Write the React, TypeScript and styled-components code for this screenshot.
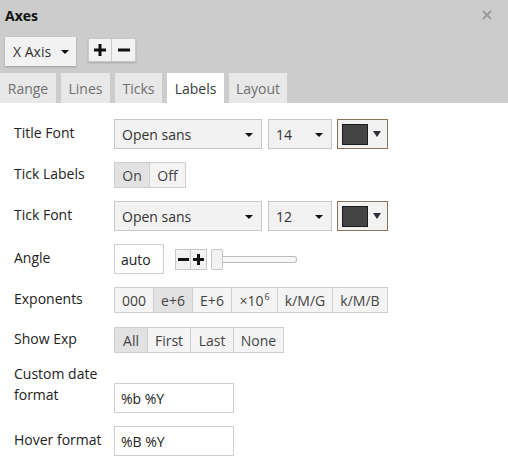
import React from "react";
import styled, { createGlobalStyle } from "styled-components";

const Global = createGlobalStyle`
  html, body { margin: 0; padding: 0; background: #fff; }
  body { font-family: "Open Sans", "Liberation Sans", sans-serif; color: #222; }
  * { box-sizing: border-box; }
`;

const Panel = styled.div`
  width: 508px;
  height: 472px;
  background: #fff;
  overflow: hidden;
`;

const Header = styled.div`
  background: #cccccc;
  padding: 5px 0 0 0;
  display: flex;
  flex-direction: column;
`;

const TitleBar = styled.div`
  display: flex;
  justify-content: space-between;
  align-items: center;
  padding: 0 16px 0 5px;
  height: 20px;
`;

const Title = styled.div`
  font-weight: 700;
  font-size: 14px;
  color: #111;
`;

const Close = styled.div`
  width: 10px;
  height: 10px;
  display: flex;
`;

const AxisBar = styled.div`
  display: flex;
  align-items: flex-start;
  gap: 12px;
  padding: 12px 5px 0 5px;
`;

const Dropdown = styled.div<{ $w: number; $h: number }>`
  width: ${(p) => p.$w}px;
  height: ${(p) => p.$h}px;
  background: #f2f2f2;
  border: 1px solid #c8c8c8;
  display: flex;
  align-items: center;
  justify-content: space-between;
  padding: 0 8px 0 7px;
  font-size: 14px;
  color: #333;
`;

const AxisDropdown = styled(Dropdown)`
  border: none;
  box-shadow: 0 1px 2px rgba(0, 0, 0, 0.25);
  padding: 0 7px 0 8px;
`;

const Caret = styled.span`
  width: 0;
  height: 0;
  border-left: 4px solid transparent;
  border-right: 4px solid transparent;
  border-top: 4px solid #111;
  margin-top: 1px;
`;

const IconPair = styled.div`
  display: flex;
  margin-top: 1px;
  box-shadow: 0 1px 2px rgba(0, 0, 0, 0.2);
`;

const IconBtn = styled.div<{ $s: number; $h: number }>`
  width: ${(p) => p.$s}px;
  height: ${(p) => p.$h}px;
  background: #f2f2f2;
  border: 1px solid #c8c8c8;
  display: flex;
  align-items: center;
  justify-content: center;
  & + & { border-left: none; }
`;

const Tabs = styled.div`
  display: flex;
  gap: 5px;
  margin-top: 7px;
`;

const Tab = styled.div<{ $active?: boolean; $w: number }>`
  width: ${(p) => p.$w}px;
  height: 30px;
  display: flex;
  align-items: center;
  justify-content: center;
  font-size: 14px;
  background: ${(p) => (p.$active ? "#fff" : "#e8e8e8")};
  color: ${(p) => (p.$active ? "#3a3a3a" : "#6f6f6f")};
`;

const Body = styled.div`
  padding: 16px 0 0 14px;
  display: flex;
  flex-direction: column;
  gap: 13px;
`;

const Row = styled.div<{ $top?: boolean; $mt?: number }>`
  display: flex;
  align-items: ${(p) => (p.$top ? "flex-start" : "center")};
  margin-top: ${(p) => p.$mt ?? 0}px;
`;

const Label = styled.div`
  width: 100px;
  font-size: 14px;
  line-height: 21px;
  color: #222;
  margin-top: -3px;
`;

const Controls = styled.div<{ $mt?: number }>`
  display: flex;
  align-items: center;
  gap: 6px;
  margin-top: ${(p) => p.$mt ?? 0}px;
`;

const ColorBtn = styled.div`
  width: 51px;
  height: 30px;
  border: 1px solid #8f7358;
  background: #f2f2f2;
  display: flex;
  align-items: center;
  gap: 5px;
  padding-left: 4px;
  margin-left: -1px;
`;

const Swatch = styled.div`
  width: 26px;
  height: 21px;
  background: #444;
  border: 1px solid #1a1a1a;
`;

const SmallCaret = styled.span`
  width: 0;
  height: 0;
  border-left: 4px solid transparent;
  border-right: 4px solid transparent;
  border-top: 6px solid #2b2f3a;
`;

const Group = styled.div`
  display: flex;
`;

const Seg = styled.div<{ $active?: boolean; $w: number }>`
  width: ${(p) => p.$w}px;
  height: 26px;
  display: flex;
  align-items: center;
  justify-content: center;
  font-size: 14px;
  color: #444;
  background: ${(p) => (p.$active ? "#e2e2e2" : "#f4f4f4")};
  border: 1px solid #cfcfcf;
  & + & { border-left: none; }
  sup { font-size: 9px; margin-top: -7px; margin-left: 1px; }
`;

const TextInput = styled.div<{ $w: number }>`
  width: ${(p) => p.$w}px;
  height: 30px;
  border: 1px solid #cfcfcf;
  background: #fff;
  display: flex;
  align-items: center;
  padding-left: 6px;
  font-size: 14px;
  color: #222;
`;

const AngleControls = styled.div`
  display: flex;
  align-items: center;
  margin-left: 11px;
`;

const Thumb = styled.div`
  width: 12px;
  height: 21px;
  background: #f2f2f2;
  border: 1px solid #c8c8c8;
  border-radius: 2px;
  margin-left: 4px;
`;

const Track = styled.div`
  width: 74px;
  height: 7px;
  border: 1px solid #bdbdbd;
  border-left: none;
  border-radius: 0 3px 3px 0;
  background: #f7f7f7;
`;

const PlusIcon = ({ s = 12, t = 3 }: { s?: number; t?: number }) => (
  <svg width={s} height={s} viewBox={`0 0 ${s} ${s}`}>
    <rect x={0} y={(s - t) / 2} width={s} height={t} fill="#111" />
    <rect x={(s - t) / 2} y={0} width={t} height={s} fill="#111" />
  </svg>
);

const MinusIcon = ({ s = 12, t = 3 }: { s?: number; t?: number }) => (
  <svg width={s} height={s} viewBox={`0 0 ${s} ${s}`}>
    <rect x={0} y={(s - t) / 2} width={s} height={t} fill="#111" />
  </svg>
);

const FontRow = ({ label, size }: { label: string; size: string }) => (
  <Row>
    <Label>{label}</Label>
    <Controls>
      <Dropdown $w={148} $h={30}>
        Open sans <Caret />
      </Dropdown>
      <Dropdown $w={64} $h={30}>
        {size} <Caret />
      </Dropdown>
      <ColorBtn>
        <Swatch />
        <SmallCaret />
      </ColorBtn>
    </Controls>
  </Row>
);

export default function App() {
  return (
    <Panel>
      <Global />
      <Header>
        <TitleBar>
          <Title>Axes</Title>
          <Close>
            <svg width="10" height="10" viewBox="0 0 10 10">
              <path d="M1 1 L9 9 M9 1 L1 9" stroke="#9a9a9a" strokeWidth="1.8" />
            </svg>
          </Close>
        </TitleBar>
        <AxisBar>
          <AxisDropdown $w={71} $h={29}>
            X Axis <Caret />
          </AxisDropdown>
          <IconPair>
            <IconBtn $s={24} $h={24}>
              <PlusIcon s={12} t={3} />
            </IconBtn>
            <IconBtn $s={24} $h={24}>
              <MinusIcon s={12} t={3} />
            </IconBtn>
          </IconPair>
        </AxisBar>
        <Tabs>
          <Tab $w={56}>Range</Tab>
          <Tab $w={49}>Lines</Tab>
          <Tab $w={47}>Ticks</Tab>
          <Tab $w={57} $active>
            Labels
          </Tab>
          <Tab $w={58}>Layout</Tab>
        </Tabs>
      </Header>
      <Body>
        <FontRow label="Title Font" size="14" />
        <Row>
          <Label>Tick Labels</Label>
          <Group>
            <Seg $w={36} $active>
              On
            </Seg>
            <Seg $w={36}>Off</Seg>
          </Group>
        </Row>
        <FontRow label="Tick Font" size="12" />
        <Row>
          <Label>Angle</Label>
          <TextInput $w={50}>auto</TextInput>
          <AngleControls>
            <IconBtn $s={16} $h={21}>
              <MinusIcon s={11} t={3} />
            </IconBtn>
            <IconBtn $s={16} $h={21}>
              <PlusIcon s={11} t={3} />
            </IconBtn>
            <Thumb />
            <Track />
          </AngleControls>
        </Row>
        <Row>
          <Label>Exponents</Label>
          <Group>
            <Seg $w={40}>000</Seg>
            <Seg $w={39} $active>
              e+6
            </Seg>
            <Seg $w={39}>E+6</Seg>
            <Seg $w={46}>
              ×10<sup>6</sup>
            </Seg>
            <Seg $w={55}>k/M/G</Seg>
            <Seg $w={55}>k/M/B</Seg>
          </Group>
        </Row>
        <Row $mt={1}>
          <Label>Show Exp</Label>
          <Group>
            <Seg $w={34} $active>
              All
            </Seg>
            <Seg $w={43}>First</Seg>
            <Seg $w={43}>Last</Seg>
            <Seg $w={50}>None</Seg>
          </Group>
        </Row>
        <Row $top>
          <Label>
            Custom date
            <br />
            format
          </Label>
          <Controls $mt={17}>
            <TextInput $w={120}>%b %Y</TextInput>
          </Controls>
        </Row>
        <Row>
          <Label>Hover format</Label>
          <TextInput $w={120}>%B %Y</TextInput>
        </Row>
      </Body>
    </Panel>
  );
}
